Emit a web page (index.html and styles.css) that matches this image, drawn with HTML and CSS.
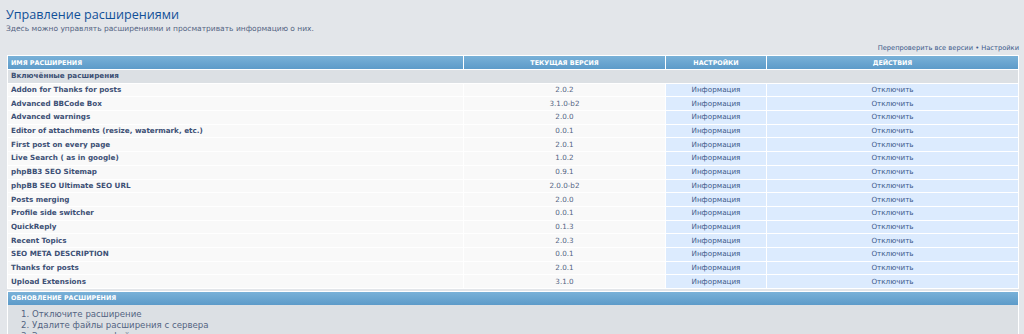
FILE: index.html
```html
<!DOCTYPE html>
<html lang="ru">
<head>
  <meta charset="UTF-8" />
  <title>Управление расширениями</title>
  <link rel="stylesheet" href="styles.css">
</head>
<body>
  <div class="page">
    <h1>Управление расширениями</h1>
    <p class="intro">Здесь можно управлять расширениями и просматривать информацию о них.</p>

    <div class="links">
      <a href="#">Перепроверить все версии</a> &bull; <a href="#">Настройки</a>
    </div>

    <table class="ext">
      <thead>
        <tr>
          <th class="name">Имя расширения</th>
          <th class="ver">Текущая версия</th>
          <th class="opt">Настройки</th>
          <th class="act">Действия</th>
        </tr>
      </thead>
      <tbody>
        <tr class="cat"><td colspan="4">Включённые расширения</td></tr>
        <tr><td class="name">Addon for Thanks for posts</td><td class="ver">2.0.2</td><td class="opt"><a href="#">Информация</a></td><td class="act"><a href="#">Отключить</a></td></tr>
        <tr><td class="name">Advanced BBCode Box</td><td class="ver">3.1.0-b2</td><td class="opt"><a href="#">Информация</a></td><td class="act"><a href="#">Отключить</a></td></tr>
        <tr><td class="name">Advanced warnings</td><td class="ver">2.0.0</td><td class="opt"><a href="#">Информация</a></td><td class="act"><a href="#">Отключить</a></td></tr>
        <tr><td class="name">Editor of attachments (resize, watermark, etc.)</td><td class="ver">0.0.1</td><td class="opt"><a href="#">Информация</a></td><td class="act"><a href="#">Отключить</a></td></tr>
        <tr><td class="name">First post on every page</td><td class="ver">2.0.1</td><td class="opt"><a href="#">Информация</a></td><td class="act"><a href="#">Отключить</a></td></tr>
        <tr><td class="name">Live Search ( as in google)</td><td class="ver">1.0.2</td><td class="opt"><a href="#">Информация</a></td><td class="act"><a href="#">Отключить</a></td></tr>
        <tr><td class="name">phpBB3 SEO Sitemap</td><td class="ver">0.9.1</td><td class="opt"><a href="#">Информация</a></td><td class="act"><a href="#">Отключить</a></td></tr>
        <tr><td class="name">phpBB SEO Ultimate SEO URL</td><td class="ver">2.0.0-b2</td><td class="opt"><a href="#">Информация</a></td><td class="act"><a href="#">Отключить</a></td></tr>
        <tr><td class="name">Posts merging</td><td class="ver">2.0.0</td><td class="opt"><a href="#">Информация</a></td><td class="act"><a href="#">Отключить</a></td></tr>
        <tr><td class="name">Profile side switcher</td><td class="ver">0.0.1</td><td class="opt"><a href="#">Информация</a></td><td class="act"><a href="#">Отключить</a></td></tr>
        <tr><td class="name">QuickReply</td><td class="ver">0.1.3</td><td class="opt"><a href="#">Информация</a></td><td class="act"><a href="#">Отключить</a></td></tr>
        <tr><td class="name">Recent Topics</td><td class="ver">2.0.3</td><td class="opt"><a href="#">Информация</a></td><td class="act"><a href="#">Отключить</a></td></tr>
        <tr><td class="name">SEO META DESCRIPTION</td><td class="ver">0.0.1</td><td class="opt"><a href="#">Информация</a></td><td class="act"><a href="#">Отключить</a></td></tr>
        <tr><td class="name">Thanks for posts</td><td class="ver">2.0.1</td><td class="opt"><a href="#">Информация</a></td><td class="act"><a href="#">Отключить</a></td></tr>
        <tr><td class="name">Upload Extensions</td><td class="ver">3.1.0</td><td class="opt"><a href="#">Информация</a></td><td class="act"><a href="#">Отключить</a></td></tr>
      </tbody>
    </table>

    <div class="update">
      <div class="update-head">Обновление расширения</div>
      <ol>
        <li>Отключите расширение</li>
        <li>Удалите файлы расширения с сервера</li>
        <li>Загрузите новые файлы</li>
      </ol>
    </div>
  </div>
</body>
</html>
```

FILE: styles.css
```css
body {
  margin: 0;
  padding: 0;
  background: #e3e6ea;
  font-family: "DejaVu Sans", Verdana, sans-serif;
  color: #536482;
  overflow: hidden;
}

a {
  color: #3d5a8a;
  text-decoration: none;
}

.page {
  padding: 0 5px 0 6px;
}

h1 {
  margin: 0;
  padding-top: 6px;
  font-family: "Open Sans", sans-serif;
  font-weight: normal;
  font-size: 12.6px;
  line-height: 18px;
  color: #115098;
}

.intro {
  margin: 0;
  font-size: 7.5px;
  line-height: 10px;
  color: #536482;
}

.links {
  margin-top: 9px;
  text-align: right;
  font-size: 6.7px;
  line-height: 10px;
  color: #3d5a8a;
}

.ext {
  width: calc(100% - 1px);
  margin: 2px 0 0 1px;
  border-collapse: separate;
  border-spacing: 1px;
  background: #fff;
  table-layout: fixed;
}

.ext th {
  height: 13px;
  padding: 0 3px;
  background: linear-gradient(#79b1d8, #5d9bc9);
  color: #fff;
  font-size: 6.4px;
  font-weight: bold;
  text-transform: uppercase;
  text-align: center;
}

.ext th.name {
  width: 449px;
  text-align: left;
}

.ext th.ver {
  width: 195px;
}

.ext th.opt {
  width: 94px;
}

.ext td {
  height: 12.7px;
  padding: 0 3px;
  font-size: 7.2px;
  line-height: 8px;
  background: #f9f9f9;
  color: #536482;
  text-align: center;
}

.ext td.name {
  text-align: left;
  font-weight: bold;
  color: #3d5075;
}

.ext td.opt,
.ext td.act {
  background: #dcebfe;
}

.ext .cat td {
  background: #dce0e4;
  text-align: left;
  font-weight: bold;
  color: #3d5075;
}

.update {
  margin: 2px 0 0 1px;
  border: 1px solid #fff;
  border-bottom: none;
  background: #dce0e4;
}

.update-head {
  height: 13px;
  line-height: 13px;
  padding: 0 3px;
  background: linear-gradient(#79b1d8, #5d9bc9);
  color: #fff;
  font-size: 6.4px;
  font-weight: bold;
  text-transform: uppercase;
}

.update ol {
  margin: 0;
  padding: 4px 0 0 24px;
  font-size: 8.6px;
  line-height: 11px;
  color: #536482;
}
```
